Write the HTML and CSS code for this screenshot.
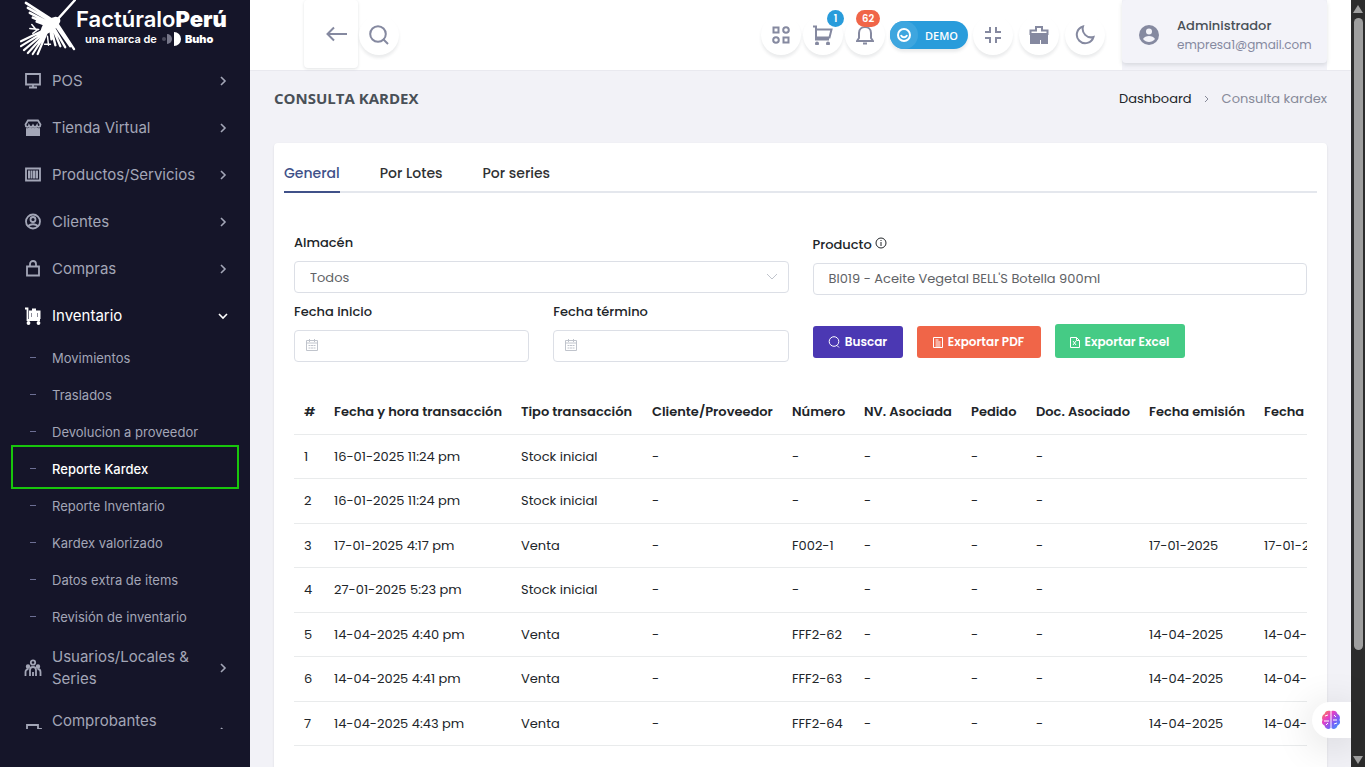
FILE: index.html
```html
<!doctype html>
<html lang="es">
<head>
    <meta charset="utf-8">
    <meta name="viewport" content="width=device-width, initial-scale=1.0">
    <title>Consulta Kardex</title>
    <link rel="stylesheet" href="styles.css">
</head>
<body>
    <!-- Sidebar -->
    <aside class="sidebar">
        <a href="#" class="logo">
            <svg class="logo-bird" viewBox="0 0 57 57" fill="none" stroke="#fff" stroke-width="2" stroke-linecap="round">
                <path d="M38 20L56 0" stroke-width="2.400"/>
                <path d="M34 21L6 3M34 23L8 8M33 25L10 13M32 26L13 18M31 27L17 22" stroke-width="2.600"/>
                <path d="M38 24L55 50M37 27L51 47M35 29L46 48M34 30L41 47M32 30L36 46M31 30L32 40" stroke-width="2.400"/>
                <path d="M30 28L1 42M30 29L1 47M29 30L4 51M28 32L8 54M27 33L13 55M27 34L18 55" stroke-width="2.200"/>
                <path d="M10 29L19 30M12 25L17 31L13 34M28 37L29 46M25 45H31" stroke-width="1.500"/>
                <path d="M22 28C25 20 32 18 36 17C41 17 43 21 39 25C36 31 29 35 19 37Z" fill="#fff" stroke="none"/>
            </svg>
            <span class="logo-text">
                <span class="logo-name">Factúralo<b>Perú</b></span>
                <span class="logo-sub">una marca de
                    <svg width="20" height="14" viewBox="0 0 20 14"><circle cx="3" cy="7" r="2" fill="#4b4b5d"/><path d="M6 2a5 5 0 0 1 0 10z" fill="#77778a"/><path d="M13 0a7 7 0 0 1 0 14z" fill="#fff"/></svg>
                    <b>Buho</b></span>
            </span>
        </a>
        <nav class="menu">
            <a href="#" class="menu-item">
                <svg class="menu-icon" viewBox="0 0 18 18"><path d="M2 2h14v10.500H2zM9 13v3M5 15.500h8"/></svg>
                <span>POS</span>
                <svg class="arrow" viewBox="0 0 10 10"><path d="M3 1l4 4-4 4"/></svg>
            </a>
            <a href="#" class="menu-item">
                <svg class="menu-icon" viewBox="0 0 18 18"><path d="M4 1.500h10l2.500 4c0 3-3 3-3.500 1c-1 2-3 2-4 0c-1 2-3 2-4 0c-.5 2-3.500 2-3.500-1z"/><path d="M2 9c2 .5 3 0 3.500-1c1 1.500 2.500 1.500 3.500 0c1 1.500 2.500 1.500 3.500 0c.5 1 1.500 1.500 3.500 1v8H2z" fill="currentColor" stroke="none"/></svg>
                <span>Tienda Virtual</span>
                <svg class="arrow" viewBox="0 0 10 10"><path d="M3 1l4 4-4 4"/></svg>
            </a>
            <a href="#" class="menu-item">
                <svg class="menu-icon" viewBox="0 0 18 18"><path d="M2 2.500h14v12H2z"/><path d="M4 4.500h2.500v8H4zM7 4.500h1.500v8H7zM9 4.500h2v8H9zM11.500 4.500h2.500v8h-2.500z" fill="currentColor" stroke="none"/></svg>
                <span>Productos/Servicios</span>
                <svg class="arrow" viewBox="0 0 10 10"><path d="M3 1l4 4-4 4"/></svg>
            </a>
            <a href="#" class="menu-item">
                <svg class="menu-icon" viewBox="0 0 18 18"><circle cx="9" cy="8.500" r="7"/><circle cx="9" cy="6.500" r="2.500"/><path d="M4 13.500c2-3 8-3 10 0"/></svg>
                <span>Clientes</span>
                <svg class="arrow" viewBox="0 0 10 10"><path d="M3 1l4 4-4 4"/></svg>
            </a>
            <a href="#" class="menu-item">
                <svg class="menu-icon" viewBox="0 0 18 18"><path d="M3 6.500h12V15.500H3zM6 6.500V4a3 3 0 0 1 6 0v2.500"/></svg>
                <span>Compras</span>
                <svg class="arrow" viewBox="0 0 10 10"><path d="M3 1l4 4-4 4"/></svg>
            </a>
            <a href="#" class="menu-item open">
                <svg class="menu-icon" viewBox="0 0 18 18"><path d="M1 1.500h2.500v11.500H16" /><path d="M5 3.500h3V1.500h4v2h4.500v8.500H5z" fill="currentColor" stroke="none"/><path d="M7.500 6v4M13.500 6v4" stroke="#8c8c99" stroke-width="1"/><circle cx="4.500" cy="16" r="1" fill="currentColor"/><circle cx="14.500" cy="16" r="1" fill="currentColor"/></svg>
                <span>Inventario</span>
                <svg class="arrow" viewBox="0 0 10 10"><path d="M1 3l4 4 4-4"/></svg>
            </a>
            <div class="submenu">
                <a href="#">Movimientos</a>
                <a href="#">Traslados</a>
                <a href="#">Devolucion a proveedor</a>
                <a href="#" class="active">Reporte Kardex</a>
                <a href="#">Reporte Inventario</a>
                <a href="#">Kardex valorizado</a>
                <a href="#">Datos extra de items</a>
                <a href="#">Revisión de inventario</a>
            </div>
            <a href="#" class="menu-item">
                <svg class="menu-icon" viewBox="0 0 18 18"><circle cx="9" cy="3.500" r="2.200"/><path d="M6 17v-6a3 3 0 0 1 6 0v6M9 13v4M1.500 17v-4a3 3 0 0 1 3-3M16.500 17v-4a3 3 0 0 0-3-3"/><circle cx="4" cy="7.500" r="1.300" fill="currentColor"/><circle cx="14" cy="7.500" r="1.300" fill="currentColor"/></svg>
                <span>Usuarios/Locales &amp; Series</span>
                <svg class="arrow" viewBox="0 0 10 10"><path d="M3 1l4 4-4 4"/></svg>
            </a>
            <a href="#" class="menu-item">
                <svg class="menu-icon" viewBox="0 0 18 18"><path d="M3 16V2h11v4h3v10zM13.500 6v10"/></svg>
                <span>Comprobantes avanzados</span>
                <svg class="arrow" viewBox="0 0 10 10"><path d="M3 1l4 4-4 4"/></svg>
            </a>
        </nav>
    </aside>

    <div class="main">
        <!-- Top bar -->
        <header class="topbar">
            <button class="back-btn" aria-label="Volver">
                <svg width="22" height="16" viewBox="0 0 22 16"><path d="M21 8H2M8 1.500L1.500 8L8 14.500"/></svg>
            </button>
            <button class="round-btn" aria-label="Buscar">
                <svg width="20" height="20" viewBox="0 0 20 20"><circle cx="9" cy="9" r="7.800"/><path d="M14 14l5 5"/></svg>
            </button>
            <div class="tools">
                <button class="round-btn" aria-label="Accesos">
                    <svg width="18" height="18" viewBox="0 0 18 18"><path d="M1.500 1.500h5v5h-5zM11.500 11.500h5v5h-5z"/><circle cx="14" cy="4" r="2.800"/><circle cx="4" cy="14" r="2.800"/></svg>
                </button>
                <button class="round-btn" aria-label="Pedidos">
                    <svg width="20" height="20" viewBox="0 0 20 20"><path d="M0 1.500h3V14.500H16M3.500 4.500h15l-2 8H3"/><circle cx="4" cy="18.500" r="1" fill="currentColor"/><circle cx="15" cy="18.500" r="1" fill="currentColor"/></svg>
                    <span class="badge blue">1</span>
                </button>
                <button class="round-btn" aria-label="Notificaciones">
                    <svg width="18" height="20" viewBox="0 0 18 20"><path d="M1 16h16l-2-3V8c0-8-12-8-12 0v5zM9 2V1M7 18.500h4"/></svg>
                    <span class="badge red">62</span>
                </button>
                <button class="demo-btn">
                    <span class="demo-face"><svg width="14" height="14" viewBox="0 0 14 14"><circle cx="7" cy="7" r="6"/><path d="M4 7c1 3 5 3 6 0"/></svg></span>
                    DEMO
                </button>
                <button class="round-btn" aria-label="Pantalla completa">
                    <svg width="16" height="16" viewBox="0 0 16 16"><path d="M0 5h5V0M11 0v5h5M0 11h5v5M16 11h-5v5"/></svg>
                </button>
                <button class="round-btn pos-btn" aria-label="Caja">
                    <svg width="20" height="20" viewBox="0 0 20 20"><path d="M1.500 9V5.500H7V2h6v3.500h5.500V9z"/><path d="M2 9h16v9h-5v-4h-3v4H2z" fill="currentColor"/></svg>
                </button>
                <button class="round-btn" aria-label="Modo oscuro">
                    <svg width="20" height="20" viewBox="0 0 20 20"><path d="M8 1.500A8.500 8.500 0 1 0 18.500 12A8.500 8.500 0 0 1 8 1.500z"/></svg>
                </button>
            </div>
            <div class="user">
                <a href="#" class="user-card">
                    <svg width="20" height="20" viewBox="0 0 20 20"><circle cx="10" cy="10" r="10" fill="#8589a0"/><circle cx="10" cy="6.500" r="3" fill="#f3f3f9"/><path d="M4 14c2-4 10-4 12 0c-3 4-9 4-12 0z" fill="#f3f3f9"/></svg>
                    <span><span class="user-name">Administrador</span><span class="user-mail">empresa1@gmail.com</span></span>
                </a>
            </div>
        </header>

        <main class="content">
            <div class="page-head">
                <h1>CONSULTA KARDEX</h1>
                <nav class="breadcrumb">
                    <a href="#">Dashboard</a>
                    <svg width="6" height="8" viewBox="0 0 6 8"><path d="M1 1l3 3-3 3"/></svg>
                    <span>Consulta kardex</span>
                </nav>
            </div>

            <section class="card">
                <div class="tabs" role="tablist">
                    <button class="tab active" role="tab" aria-selected="true">General</button>
                    <button class="tab" role="tab" aria-selected="false">Por Lotes</button>
                    <button class="tab" role="tab" aria-selected="false">Por series</button>
                </div>

                <div class="panel">
                    <form class="filters">
                        <div class="filter-col">
                            <label for="almacen">Almacén</label>
                            <div class="field">
                                <select id="almacen"><option>Todos</option></select>
                                <svg class="caret" width="12" height="8" viewBox="0 0 12 8"><path d="M1 1l5 5 5-5"/></svg>
                            </div>
                            <div class="dates">
                                <div>
                                    <label for="inicio">Fecha inicio</label>
                                    <div class="field">
                                        <input type="text" id="inicio">
                                        <svg class="calendar" width="12" height="12" viewBox="0 0 12 12"><path d="M.5 1.500h11v10H.5zM.5 4h11M3.500 0v3M8.500 0v3"/><path d="M2.500 6.500h7M2.500 9h7" stroke-dasharray="2 .5"/></svg>
                                    </div>
                                </div>
                                <div>
                                    <label for="termino">Fecha término</label>
                                    <div class="field">
                                        <input type="text" id="termino">
                                        <svg class="calendar" width="12" height="12" viewBox="0 0 12 12"><path d="M.5 1.500h11v10H.5zM.5 4h11M3.500 0v3M8.500 0v3"/><path d="M2.500 6.500h7M2.500 9h7" stroke-dasharray="2 .5"/></svg>
                                    </div>
                                </div>
                            </div>
                        </div>
                        <div class="filter-col product-col">
                            <label for="producto">Producto
                                <svg class="info" width="12" height="12" viewBox="0 0 12 12"><circle cx="6" cy="6" r="5"/><path d="M6 5v4M6 3v1"/></svg>
                            </label>
                            <div class="field">
                                <input type="text" id="producto" value="BI019 - Aceite Vegetal BELL'S Botella 900ml">
                            </div>
                            <div class="actions">
                                <button type="button" class="btn btn-search"><svg width="12" height="12" viewBox="0 0 12 12"><circle cx="6" cy="5.500" r="4.800"/><path d="M9 9.500l2 2"/></svg>Buscar</button>
                                <button type="button" class="btn btn-pdf"><svg width="10" height="11" viewBox="0 0 10 11"><path d="M.5.500h9v10H.5zM2.500 3h3M2.500 5h5M2.500 7h5M2.500 9h5"/></svg>Exportar PDF</button>
                                <button type="button" class="btn btn-excel"><svg width="10" height="11" viewBox="0 0 10 11"><path d="M.5.500h6l3 3v7h-9zM6.500.500v3h3M3 4l3 4M6 4l-3 4"/></svg>Exportar Excel</button>
                            </div>
                        </div>
                    </form>

                    <div class="table-wrap">
                        <table>
                            <thead>
                                <tr>
                                    <th class="c-num">#</th>
                                    <th class="c-date">Fecha y hora transacción</th>
                                    <th class="c-type">Tipo transacción</th>
                                    <th class="c-client">Cliente/Proveedor</th>
                                    <th class="c-number">Número</th>
                                    <th class="c-nv">NV. Asociada</th>
                                    <th class="c-order">Pedido</th>
                                    <th class="c-doc">Doc. Asociado</th>
                                    <th class="c-issue">Fecha emisión</th>
                                    <th class="c-reg">Fecha registro</th>
                                </tr>
                            </thead>
                            <tbody>
                                <tr><td>1</td><td>16-01-2025 11:24 pm</td><td>Stock inicial</td><td>-</td><td>-</td><td>-</td><td>-</td><td>-</td><td></td><td></td></tr>
                                <tr><td>2</td><td>16-01-2025 11:24 pm</td><td>Stock inicial</td><td>-</td><td>-</td><td>-</td><td>-</td><td>-</td><td></td><td></td></tr>
                                <tr><td>3</td><td>17-01-2025 4:17 pm</td><td>Venta</td><td>-</td><td>F002-1</td><td>-</td><td>-</td><td>-</td><td>17-01-2025</td><td>17-01-2025</td></tr>
                                <tr><td>4</td><td>27-01-2025 5:23 pm</td><td>Stock inicial</td><td>-</td><td>-</td><td>-</td><td>-</td><td>-</td><td></td><td></td></tr>
                                <tr><td>5</td><td>14-04-2025 4:40 pm</td><td>Venta</td><td>-</td><td>FFF2-62</td><td>-</td><td>-</td><td>-</td><td>14-04-2025</td><td>14-04-2025</td></tr>
                                <tr><td>6</td><td>14-04-2025 4:41 pm</td><td>Venta</td><td>-</td><td>FFF2-63</td><td>-</td><td>-</td><td>-</td><td>14-04-2025</td><td>14-04-2025</td></tr>
                                <tr><td>7</td><td>14-04-2025 4:43 pm</td><td>Venta</td><td>-</td><td>FFF2-64</td><td>-</td><td>-</td><td>-</td><td>14-04-2025</td><td>14-04-2025</td></tr>
                            </tbody>
                        </table>
                    </div>
                </div>
            </section>
        </main>

        <button class="assistant" aria-label="Asistente">
            <svg width="20" height="20" viewBox="0 0 20 20">
                <defs><linearGradient id="brain" x1="0" y1="0" x2="1" y2="1"><stop offset="0" stop-color="#ff8a3c"/><stop offset=".35" stop-color="#e83fc4"/><stop offset=".65" stop-color="#7d5cf5"/><stop offset="1" stop-color="#2fa8ff"/></linearGradient></defs>
                <path d="M9.500 1C7 0 4 1 3.500 4C1 5 .5 8 1.500 10C0 13 2 15 3.500 15.500C4 19 8 20 9.500 18zM10.500 1C13 0 16 1 16.500 4C19 5 19.500 8 18.500 10C20 13 18 15 16.500 15.500C16 19 12 20 10.500 18z" fill="url(#brain)"/>
                <path d="M4 6l3-1M3 11h5M5 15l2-2M13 5l2 2M12 10h4M13 14l3-1" stroke="#fff" stroke-width="1" fill="none"/>
            </svg>
        </button>
    </div>

    <!-- Scroll track -->
    <div class="scroll" aria-hidden="true">
        <span class="scroll-up"></span>
        <span class="scroll-thumb"></span>
        <span class="scroll-down"></span>
    </div>
</body>
</html>
```
FILE: styles.css
```css
* {
    box-sizing: border-box;
}
body {
    margin: 0;
    display: flex;
    height: 100vh;
    overflow: hidden;
    background-color: #f2f2f7;
    font-family: "Poppins", "Inter", sans-serif;
    font-size: 13px;
    color: #212529;
}
a {
    color: inherit;
    text-decoration: none;
}
button,
input,
select {
    font-family: inherit;
    font-size: 13px;
}
button {
    border: none;
    padding: 0;
    cursor: pointer;
}
svg {
    fill: none;
    stroke: currentColor;
    flex-shrink: 0;
}

/* Sidebar */
.sidebar {
    width: 250px;
    flex-shrink: 0;
    display: flex;
    flex-direction: column;
    padding-bottom: 38px;
    background-color: #151529;
    color: #a3a6b7;
    font-family: "Inter", sans-serif;
}
.logo {
    display: flex;
    height: 57px;
    padding-left: 20px;
    flex-shrink: 0;
    color: #fff;
}
.logo-bird {
    width: 56px;
    height: 56px;
}
.logo-text {
    display: flex;
    flex-direction: column;
    padding-top: 7px;
}
.logo-text svg {
    stroke: none;
}
.logo-name {
    font-size: 22px;
    line-height: 25px;
    font-weight: 600;
}
.logo-sub {
    display: flex;
    align-items: center;
    gap: 4px;
    padding-left: 9px;
    font-size: 11px;
    line-height: 14px;
    font-weight: 600;
}
.menu {
    flex: 1;
    min-height: 0;
    overflow: hidden;
}
.menu-item {
    display: flex;
    align-items: center;
    gap: 10px;
    min-height: 47px;
    padding: 10px 22px 10px 24px;
    font-size: 15px;
    line-height: 22px;
}
.menu-item span {
    flex: 1;
    min-width: 0;
}
.menu-item.open {
    color: #fff;
}
.menu-icon {
    width: 18px;
    height: 18px;
    stroke-width: 1.8;
}
.arrow {
    width: 10px;
    height: 10px;
    stroke-width: 1.6;
}
.submenu {
    padding-bottom: 1px;
}
.submenu a {
    position: relative;
    display: flex;
    align-items: center;
    gap: 16px;
    height: 37px;
    padding-left: 30px;
}
.submenu a::before {
    content: "";
    width: 6px;
    height: 1px;
    background-color: #6c6f94;
}
.submenu .active {
    color: #fff;
    font-weight: 500;
}
.submenu .active::after {
    content: "";
    position: absolute;
    inset: -5px 11px -2px;
    border: 2px solid #18c60c;
}

/* Top bar */
.main {
    position: relative;
    flex: 1;
    min-width: 0;
    display: flex;
    flex-direction: column;
}
.topbar {
    display: flex;
    align-items: center;
    height: 71px;
    flex-shrink: 0;
    padding: 0 24px 0 54px;
    background-color: #fff;
    border-bottom: 1px solid #e9e9ef;
    color: #8589a0;
}
.topbar svg {
    stroke-width: 2;
}
.back-btn {
    align-self: flex-start;
    width: 54px;
    height: 68px;
    padding: 6px 0 0 12px;
    margin-right: 1px;
    background-color: #fff;
    color: inherit;
    border-radius: 4px;
    box-shadow: 0 1px 3px rgba(56, 65, 74, 0.15);
}
.round-btn {
    position: relative;
    display: flex;
    align-items: center;
    justify-content: center;
    width: 40px;
    height: 40px;
    background-color: #fff;
    color: inherit;
    border-radius: 50%;
    box-shadow: 0 3px 3px rgba(56, 65, 74, 0.1);
}
.tools {
    display: flex;
    align-items: center;
    gap: 2px;
    margin-left: auto;
    margin-right: 17px;
}
.badge {
    position: absolute;
    top: -5px;
    left: 24px;
    padding: 0 5px;
    min-width: 17px;
    border-radius: 9px;
    color: #fff;
    font-size: 10px;
    line-height: 17px;
    font-weight: 600;
}
.badge.blue {
    background-color: #299cdb;
}
.badge.red {
    left: 11px;
    padding: 0 6px;
    background-color: #f06548;
}
.demo-btn {
    display: flex;
    align-items: center;
    gap: 7px;
    width: 78px;
    height: 28px;
    margin: 0 3px;
    border-radius: 14px;
    background-color: #299cdb;
    color: #fff;
    font-family: "Open Sans", sans-serif;
    font-size: 11px;
    font-weight: 600;
    box-shadow: 0 3px 3px rgba(56, 65, 74, 0.1);
}
.demo-face {
    display: flex;
    align-items: center;
    justify-content: center;
    width: 28px;
    height: 28px;
    border-radius: 50%;
    background-color: #3ea6df;
}
.pos-btn {
    margin: 0 4px;
}
.user {
    width: 205px;
    height: 70px;
    background-color: #f3f3f9;
}
.user-card {
    display: flex;
    align-items: center;
    gap: 18px;
    height: 63px;
    padding: 6px 0 0 17px;
    border-radius: 4px;
    background-color: #f3f3f9;
    box-shadow: 0 2px 4px rgba(56, 65, 74, 0.15);
}
.user-card svg {
    stroke: none;
}
.user-name,
.user-mail {
    display: block;
    line-height: 19px;
}
.user-name {
    color: #495057;
    font-weight: 500;
}
.user-mail {
    font-size: 12px;
}

/* Page */
.content {
    flex: 1;
    min-height: 0;
    display: flex;
    flex-direction: column;
    padding: 0 24px;
}
.page-head {
    display: flex;
    align-items: center;
    justify-content: space-between;
    height: 56px;
    margin-bottom: 16px;
    flex-shrink: 0;
}
.page-head h1 {
    margin: 0;
    padding-bottom: 2px;
    color: #495057;
    font-family: "Open Sans", sans-serif;
    font-size: 15px;
    font-weight: 700;
}
.breadcrumb {
    display: flex;
    align-items: center;
    gap: 12px;
    color: #878a99;
}
.breadcrumb a {
    color: #212529;
}
.card {
    flex: 1;
    padding: 10px;
    background-color: #fff;
    border-radius: 4px 4px 0 0;
    box-shadow: 0 1px 2px rgba(56, 65, 74, 0.15);
}
.tabs {
    display: flex;
    gap: 40px;
    height: 40px;
    border-bottom: 2px solid #e4e7ed;
}
.tab {
    height: 40px;
    padding-top: 2px;
    background: none;
    border-bottom: 2px solid transparent;
    color: #303133;
    font-size: 14px;
    font-weight: 500;
}
.tab.active {
    color: #405189;
    border-bottom-color: #405189;
}
.panel {
    padding: 40px 10px 20px;
}

/* Filters */
.filters {
    display: grid;
    grid-template-columns: 1fr 1fr;
    gap: 24px;
}
.filters label {
    display: block;
    height: 20px;
    margin-bottom: 8px;
    line-height: 20px;
    font-weight: 500;
}
.product-col {
    padding-top: 2px;
}
.field {
    position: relative;
}
.field input,
.field select {
    display: block;
    width: 100%;
    height: 32px;
    padding: 0 15px;
    border: 1px solid #dcdfe6;
    border-radius: 4px;
    background-color: #fff;
    color: #606266;
    appearance: none;
}
.caret {
    position: absolute;
    top: 12px;
    right: 11px;
    stroke: #c0c4cc;
}
.calendar {
    position: absolute;
    top: 9px;
    left: 12px;
    stroke: #c0c4cc;
}
.dates {
    display: grid;
    grid-template-columns: 1fr 1fr;
    gap: 24px;
    margin-top: 9px;
}
.actions {
    display: flex;
    align-items: flex-end;
    gap: 14px;
    margin-top: 29px;
}
.btn {
    display: flex;
    align-items: center;
    justify-content: center;
    gap: 5px;
    height: 32px;
    border-radius: 3px;
    color: #fff;
    font-size: 12px;
    font-weight: 600;
}
.btn-search {
    width: 90px;
    background-color: #4b38b3;
}
.btn-pdf {
    width: 124px;
    background-color: #f06548;
}
.btn-excel {
    width: 130px;
    height: 34px;
    padding-top: 2px;
    background-color: #45cb85;
}

/* Table */
.table-wrap {
    margin-top: 26px;
    overflow: hidden;
}
table {
    width: 1110px;
    table-layout: fixed;
    border-collapse: collapse;
}
th,
td {
    padding: 1px 10px 0;
    text-align: left;
    white-space: nowrap;
    border-bottom: 1px solid #e9ebec;
}
th {
    height: 46px;
    padding-top: 2px;
    font-weight: 600;
}
td {
    height: 44px;
}
tr:nth-child(even) td {
    height: 45px;
}
.c-num {
    width: 30px;
}
.c-date {
    width: 187px;
}
.c-type {
    width: 131px;
}
.c-client {
    width: 140px;
}
.c-number {
    width: 72px;
}
.c-nv {
    width: 107px;
}
.c-order {
    width: 65px;
}
.c-doc {
    width: 113px;
}
.c-issue {
    width: 115px;
}

.assistant {
    position: absolute;
    top: 702px;
    right: 0;
    display: flex;
    align-items: center;
    width: 39px;
    height: 36px;
    padding-left: 9px;
    border-radius: 18px 0 0 18px;
    background-color: #fff;
    box-shadow: 0 6px 40px rgba(0, 0, 0, 0.16);
}
.assistant svg {
    stroke: none;
}

/* Scroll track */
.scroll {
    display: flex;
    flex-direction: column;
    align-items: center;
    gap: 5px;
    width: 14px;
    padding: 5px 0 3px;
    flex-shrink: 0;
    background-color: #2c2c2c;
}
.scroll-up,
.scroll-down {
    border: 5px solid transparent;
}
.scroll-up {
    border-top: none;
    border-bottom: 8px solid #9f9f9f;
}
.scroll-thumb {
    width: 9px;
    height: 632px;
    border-radius: 5px;
    background-color: #9f9f9f;
}
.scroll-down {
    margin-top: auto;
    border-bottom: none;
    border-top: 8px solid #9f9f9f;
}
```
